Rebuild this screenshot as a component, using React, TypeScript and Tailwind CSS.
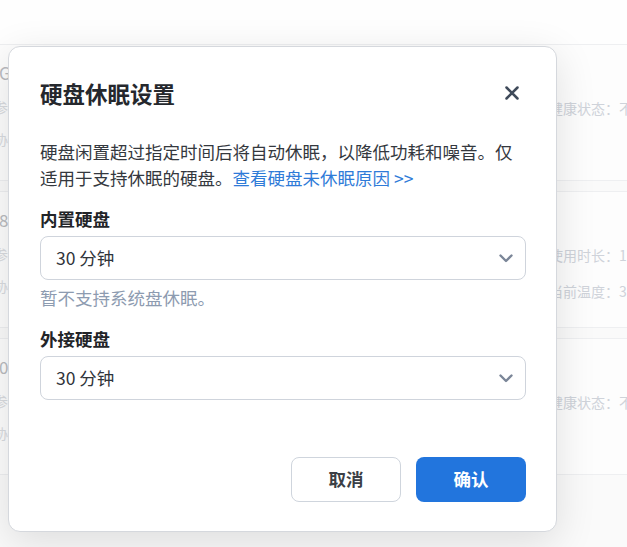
import React from 'react';

const font = "font-['Noto_Sans_CJK_SC','Noto_Sans',sans-serif]";

interface DiskRow {
  title: string;
  right: string[];
}

const rows: DiskRow[] = [
  { title: 'G', right: ['健康状态：不'] },
  { title: '8', right: ['使用时长：1', '当前温度：3'] },
  { title: '0 (', right: ['健康状态：不'] },
];

const Chevron = () => (
  <svg width="14" height="9" viewBox="0 0 14 9" fill="none">
    <polyline
      points="1.5,1.5 7,7 12.5,1.5"
      stroke="#7b8698"
      strokeWidth="2.4"
      strokeLinecap="round"
      strokeLinejoin="round"
    />
  </svg>
);

const SelectBox = ({ value }: { value: string }) => (
  <div className="mt-[4px] h-[44px] rounded-[8px] border border-[#cfd4dc] bg-white pl-[15px] pr-[12px] flex items-center justify-between">
    <span className="text-[17.5px] leading-[26px] text-[#30343a]">{value}</span>
    <Chevron />
  </div>
);

const BackgroundCard = ({ row }: { row: DiskRow }) => (
  <div className="h-[137px] border-y border-[#eeeff1] bg-[#fdfdfd] flex justify-between">
    {/* left column, mostly hidden behind the dialog */}
    <div className="ml-[-6px] flex flex-col">
      <span className="ml-[5px] mt-[15px] text-[17px] leading-[26px] text-[#b9bbbf]">{row.title}</span>
      <span className="mt-[10px] text-[14px] leading-[22px] text-[#d9dbdf]">参数</span>
      <span className="mt-[10px] text-[14px] leading-[22px] text-[#d9dbdf]">协议</span>
    </div>
    <div className="w-[78px] pt-[52px] flex flex-col gap-[14px]">
      {row.right.map((t) => (
        <span key={t} className="whitespace-nowrap text-[14px] leading-[22px] text-[#cfd3da]">
          {t}
        </span>
      ))}
    </div>
  </div>
);

export default function App() {
  return (
    <div className={`relative w-[627px] h-[547px] overflow-hidden bg-[#fafafa] ${font}`}>
      {/* page behind the dialog */}
      <div className="h-[44px] bg-[#fefefe]" />
      <div className="flex flex-col gap-[10px]">
        {rows.map((r, i) => (
          <BackgroundCard key={i} row={r} />
        ))}
      </div>

      {/* dialog layer */}
      <div className="absolute inset-0 pl-[8px] pt-[46px]">
        <div className="w-[549px] h-[486px] rounded-[12px] border border-[#d5d8dd] bg-white shadow-[0_10px_40px_rgba(0,0,0,0.12)] pl-[31px] pr-[30px] pt-[31px] flex flex-col">
          {/* Header */}
          <div className="h-[30px] flex items-center justify-between">
            <h2 className="text-[22.5px] leading-[30px] font-bold text-[#25282d]">硬盘休眠设置</h2>
            <button className="mr-[7px] w-[14px] h-[14px] flex items-center justify-center">
              <svg width="14" height="14" viewBox="0 0 14 14" fill="none">
                <path d="M1.5 1.5 L12.5 12.5 M12.5 1.5 L1.5 12.5" stroke="#3f4a5a" strokeWidth="2.5" strokeLinecap="round" />
              </svg>
            </button>
          </div>

          {/* Content */}
          <p className="mt-[31px] text-[17.5px] leading-[26px] text-[#34383e]">
            硬盘闲置超过指定时间后将自动休眠，以降低功耗和噪音。仅适用于支持休眠的硬盘。
            <span className="text-[#2f7bd8]">查看硬盘未休眠原因 &gt;&gt;</span>
          </p>

          <div className="mt-[15px] text-[17.5px] leading-[26px] font-bold text-[#222428]">内置硬盘</div>
          <SelectBox value="30 分钟" />
          <div className="mt-[5px] text-[17.5px] leading-[26px] text-[#8d9bb0]">暂不支持系统盘休眠。</div>

          <div className="mt-[15px] text-[17.5px] leading-[26px] font-bold text-[#222428]">外接硬盘</div>
          <SelectBox value="30 分钟" />

          {/* Footer */}
          <div className="mt-[57px] flex justify-end gap-[15px]">
            <button className="w-[110px] h-[45px] rounded-[8px] border border-[#cfd5dd] bg-white text-[17.5px] font-bold text-[#3b3f46]">
              取消
            </button>
            <button className="w-[110px] h-[45px] rounded-[8px] bg-[#2275dd] text-[17.5px] font-bold text-white">
              确认
            </button>
          </div>
        </div>
      </div>
    </div>
  );
}
